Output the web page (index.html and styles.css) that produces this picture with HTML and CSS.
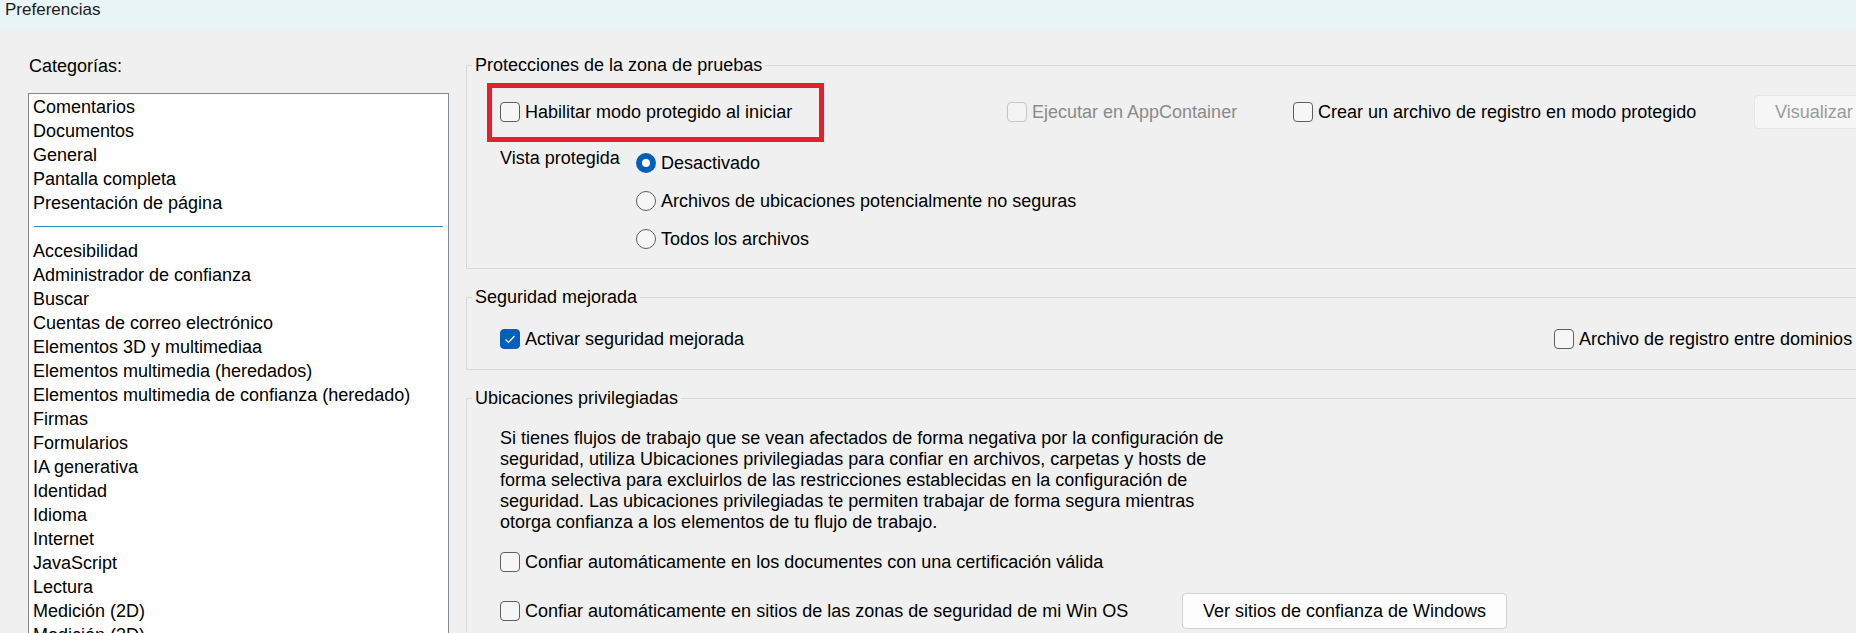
FILE: index.html
```html
<!DOCTYPE html>
<html lang="es">
<head>
<meta charset="utf-8">
<title>Preferencias</title>
<link rel="stylesheet" href="styles.css">
</head>
<body>
<div class="window">
  <header class="titlebar">Preferencias</header>
  <div class="main">
    <aside class="sidebar">
      <div class="cat-label">Categorías:</div>
      <ul class="listbox">
        <li>Comentarios</li>
        <li>Documentos</li>
        <li>General</li>
        <li>Pantalla completa</li>
        <li>Presentación de página</li>
        <li class="sep" aria-hidden="true"></li>
        <li>Accesibilidad</li>
        <li>Administrador de confianza</li>
        <li>Buscar</li>
        <li>Cuentas de correo electrónico</li>
        <li>Elementos 3D y multimediaa</li>
        <li>Elementos multimedia (heredados)</li>
        <li>Elementos multimedia de confianza (heredado)</li>
        <li>Firmas</li>
        <li>Formularios</li>
        <li>IA generativa</li>
        <li>Identidad</li>
        <li>Idioma</li>
        <li>Internet</li>
        <li>JavaScript</li>
        <li>Lectura</li>
        <li>Medición (2D)</li>
        <li>Medición (3D)</li>
        <li>Medición (geográfica)</li>
      </ul>
    </aside>

    <section class="panel">
      <fieldset class="group group-first">
        <legend>Protecciones de la zona de pruebas</legend>
        <div class="group-body body-1">
          <div class="row row-top">
            <label class="opt highlighted"><span class="cb"></span><span>Habilitar modo protegido al iniciar</span></label>
            <label class="opt disabled"><span class="cb"></span><span>Ejecutar en AppContainer</span></label>
            <label class="opt"><span class="cb"></span><span>Crear un archivo de registro en modo protegido</span></label>
            <button class="btn btn-disabled" type="button">Visualizar</button>
          </div>
          <div class="vista">
            <div class="vista-label">Vista protegida</div>
            <div class="radios">
              <label class="opt"><span class="rb on"></span><span>Desactivado</span></label>
              <label class="opt"><span class="rb"></span><span>Archivos de ubicaciones potencialmente no seguras</span></label>
              <label class="opt"><span class="rb"></span><span>Todos los archivos</span></label>
            </div>
          </div>
        </div>
      </fieldset>

      <fieldset class="group">
        <legend>Seguridad mejorada</legend>
        <div class="group-body body-2">
          <div class="row row-sec">
            <label class="opt"><span class="cb checked"><svg viewBox="0 0 20 20" width="20" height="20"><polyline points="5.5,10.5 8.5,13.5 14.5,7" fill="none" stroke="#fff" stroke-width="1.2"/></svg></span><span>Activar seguridad mejorada</span></label>
            <label class="opt"><span class="cb"></span><span>Archivo de registro entre dominios</span></label>
          </div>
        </div>
      </fieldset>

      <fieldset class="group">
        <legend>Ubicaciones privilegiadas</legend>
        <div class="group-body body-3">
          <p class="desc">Si tienes flujos de trabajo que se vean afectados de forma negativa por la configuración de seguridad, utiliza Ubicaciones privilegiadas para confiar en archivos, carpetas y hosts de forma selectiva para excluirlos de las restricciones establecidas en la configuración de seguridad. Las ubicaciones privilegiadas te permiten trabajar de forma segura mientras otorga confianza a los elementos de tu flujo de trabajo.</p>
          <div class="row row-cert">
            <label class="opt"><span class="cb"></span><span>Confiar automáticamente en los documentes con una certificación válida</span></label>
          </div>
          <div class="row row-win">
            <label class="opt"><span class="cb"></span><span>Confiar automáticamente en sitios de las zonas de seguridad de mi Win OS</span></label>
            <button class="btn btn-white" type="button">Ver sitios de confianza de Windows</button>
          </div>
        </div>
      </fieldset>
    </section>
  </div>
</div>
</body>
</html>
```

FILE: styles.css
```css
* { box-sizing: border-box; }

html, body {
  margin: 0;
  padding: 0;
}

body {
  width: 1856px;
  height: 633px;
  overflow: hidden;
  background: #f0f0f0;
  font-family: "Liberation Sans", Arial, sans-serif;
  font-size: 18px;
  color: #000;
}

.window {
  width: 1856px;
  height: 633px;
  overflow: hidden;
}

.titlebar {
  height: 30px;
  background: #e9f4f7;
  font-size: 17px;
  line-height: 20px;
  padding-left: 5px;
  color: #1c1c1c;
}

.main {
  display: flex;
  align-items: flex-start;
}

.sidebar {
  flex: none;
  width: 449px;
  padding-left: 28px;
}

.cat-label {
  margin-top: 24px;
  padding-left: 1px;
  line-height: 24px;
}

.listbox {
  list-style: none;
  margin: 15px 0 0 0;
  padding: 1px 4px 0 4px;
  width: 421px;
  height: 560px;
  background: #fff;
  border: 1px solid #828790;
  overflow: hidden;
}

.listbox li {
  line-height: 24px;
  height: 24px;
  white-space: nowrap;
}

.listbox li.sep {
  position: relative;
  display: flex;
  align-items: center;
  padding: 0 1px;
}

.listbox li.sep::before {
  content: "";
  display: block;
  flex: 1;
  height: 1px;
  background: #2a8dbf;
  margin-top: -1px;
}

.panel {
  flex: none;
  width: 1500px;
  margin-left: 17px;
  padding-top: 25px;
}

.group {
  margin: 18px 0 0 0;
  padding: 0;
  border: 1px solid #d9d9d9;
  min-width: 0;
}

.group-first {
  margin-top: 0;
}

.group legend {
  margin-left: 5px;
  padding: 0 3px;
  line-height: 20px;
  font-size: 18px;
  color: #000;
}

.group-body {
  padding-left: 33px;
}

.body-1 { padding-top: 20px; padding-bottom: 17px; }
.body-2 { padding-top: 20px; padding-bottom: 18px; }
.body-3 { padding-top: 20px; padding-bottom: 10px; }

.row {
  display: grid;
  align-items: center;
}

.row-top {
  grid-template-columns: 507px 286px 461px auto;
  height: 34px;
}

.row-sec {
  grid-template-columns: 1054px auto;
  height: 24px;
}

.row-cert {
  height: 24px;
  margin-top: 17px;
}

.row-win {
  grid-template-columns: 682px auto;
  justify-content: start;
  height: 36px;
  margin-top: 19px;
}

.opt {
  display: flex;
  align-items: center;
  gap: 5px;
  line-height: 24px;
  height: 24px;
  white-space: nowrap;
  justify-self: start;
}

.cb {
  flex: none;
  width: 20px;
  height: 20px;
  border: 1px solid #5f5f5f;
  border-radius: 4px;
  background: #f6f6f6;
  display: block;
}

.cb svg { display: block; margin: -1px; }

.cb.checked {
  background: #005fb8;
  border-color: #005fb8;
}

.disabled { color: #8a8a8a; }
.disabled .cb {
  border-color: #c6c6c6;
  background: #f3f3f3;
}

.highlighted {
  position: relative;
}

.highlighted::after {
  content: "";
  position: absolute;
  left: -13px;
  top: -17px;
  right: -32px;
  bottom: -18px;
  border: 5px solid #e3202b;
  pointer-events: none;
}

.rb {
  flex: none;
  width: 20px;
  height: 20px;
  border-radius: 50%;
  border: 1px solid #5f5f5f;
  background: #f6f6f6;
  display: block;
}

.rb.on {
  border: 6px solid #005fb8;
  background: #fff;
}

.vista {
  display: grid;
  grid-template-columns: 136px auto;
  margin-top: 22px;
}

.vista-label {
  line-height: 24px;
  margin-top: -5px;
}

.radios {
  display: flex;
  flex-direction: column;
  gap: 14px;
}

.btn {
  font-family: inherit;
  font-size: 18px;
  border-radius: 4px;
  margin: 0;
  cursor: default;
}

.btn-disabled {
  height: 34px;
  padding: 0 20px;
  width: 140px;
  text-align: left;
  background: #f6f6f6;
  border: 1px solid #e6e6e6;
  color: #9b9b9b;
  justify-self: start;
}

.btn-white {
  width: 325px;
  height: 36px;
  background: #fdfdfd;
  border: 1px solid #d2d2d2;
  color: #000;
  padding: 0;
}

.desc {
  margin: 0;
  width: 730px;
  line-height: 21px;
}
```
